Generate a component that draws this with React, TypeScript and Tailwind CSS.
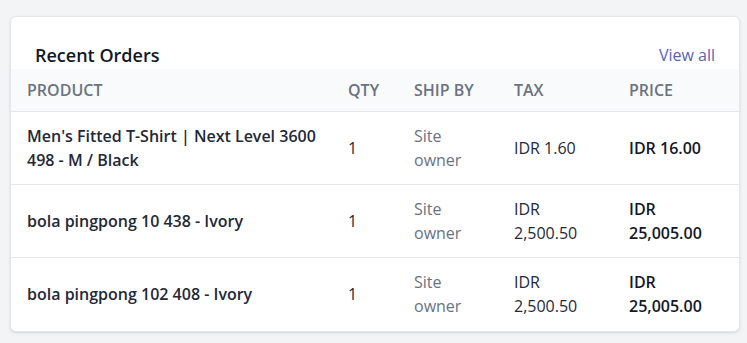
const orders = [
  { product: "Men's Fitted T-Shirt | Next Level 3600 498 - M / Black", qty: 1, shipBy: 'Site owner', tax: 'IDR 1.60', price: 'IDR 16.00' },
  { product: 'bola pingpong 10 438 - Ivory', qty: 1, shipBy: 'Site owner', tax: 'IDR 2,500.50', price: 'IDR 25,005.00' },
  { product: 'bola pingpong 102 408 - Ivory', qty: 1, shipBy: 'Site owner', tax: 'IDR 2,500.50', price: 'IDR 25,005.00' },
]

export default function App() {
  return (
    <div className="min-h-[343px] w-[747px] bg-[#f3f4f6] pt-4 pl-[10px] font-['Open_Sans',sans-serif]">
      <div className="w-[730px] overflow-hidden rounded-md border border-[#e5e7eb] bg-white shadow-sm">
        <div className="flex items-end justify-between px-6 pt-6">
          <h2 className="text-lg leading-7 font-semibold text-[#111827]">Recent Orders</h2>
          <a href="#" className="text-base leading-7 text-[#5b5fb5]">View all</a>
        </div>
        <table className="w-full table-fixed border-collapse text-left">
          <colgroup>
            <col className="w-[321px]" />
            <col className="w-[66px]" />
            <col className="w-[100px]" />
            <col className="w-[115px]" />
            <col />
          </colgroup>
          <thead>
            <tr className="border-b border-[#e5e7eb] bg-[#f9fafb]">
              <th className="px-4 py-[9px] text-base leading-6 font-semibold text-[#6b7280] uppercase">Product</th>
              <th className="px-4 py-[9px] text-base leading-6 font-semibold text-[#6b7280] uppercase">Qty</th>
              <th className="px-4 py-[9px] text-base leading-6 font-semibold text-[#6b7280] uppercase">Ship by</th>
              <th className="px-4 py-[9px] text-base leading-6 font-semibold text-[#6b7280] uppercase">Tax</th>
              <th className="px-4 py-[9px] text-base leading-6 font-semibold text-[#6b7280] uppercase">Price</th>
            </tr>
          </thead>
          <tbody>
            {orders.map((o, i) => (
              <tr key={i} className="h-[73px] border-b border-[#e5e7eb] last:border-b-0">
                <td className="px-4 py-3 text-base leading-6 font-semibold text-[#1f2937]">{o.product}</td>
                <td className="px-4 py-3 text-base leading-6 text-[#1f2937]">{o.qty}</td>
                <td className="px-4 py-3 text-base leading-6 text-[#6b7280]">{o.shipBy}</td>
                <td className="px-4 py-3 text-base leading-6 text-[#1f2937]">{o.tax}</td>
                <td className="px-4 py-3 text-base leading-6 font-semibold text-[#111827]">{o.price}</td>
              </tr>
            ))}
          </tbody>
        </table>
      </div>
    </div>
  )
}
